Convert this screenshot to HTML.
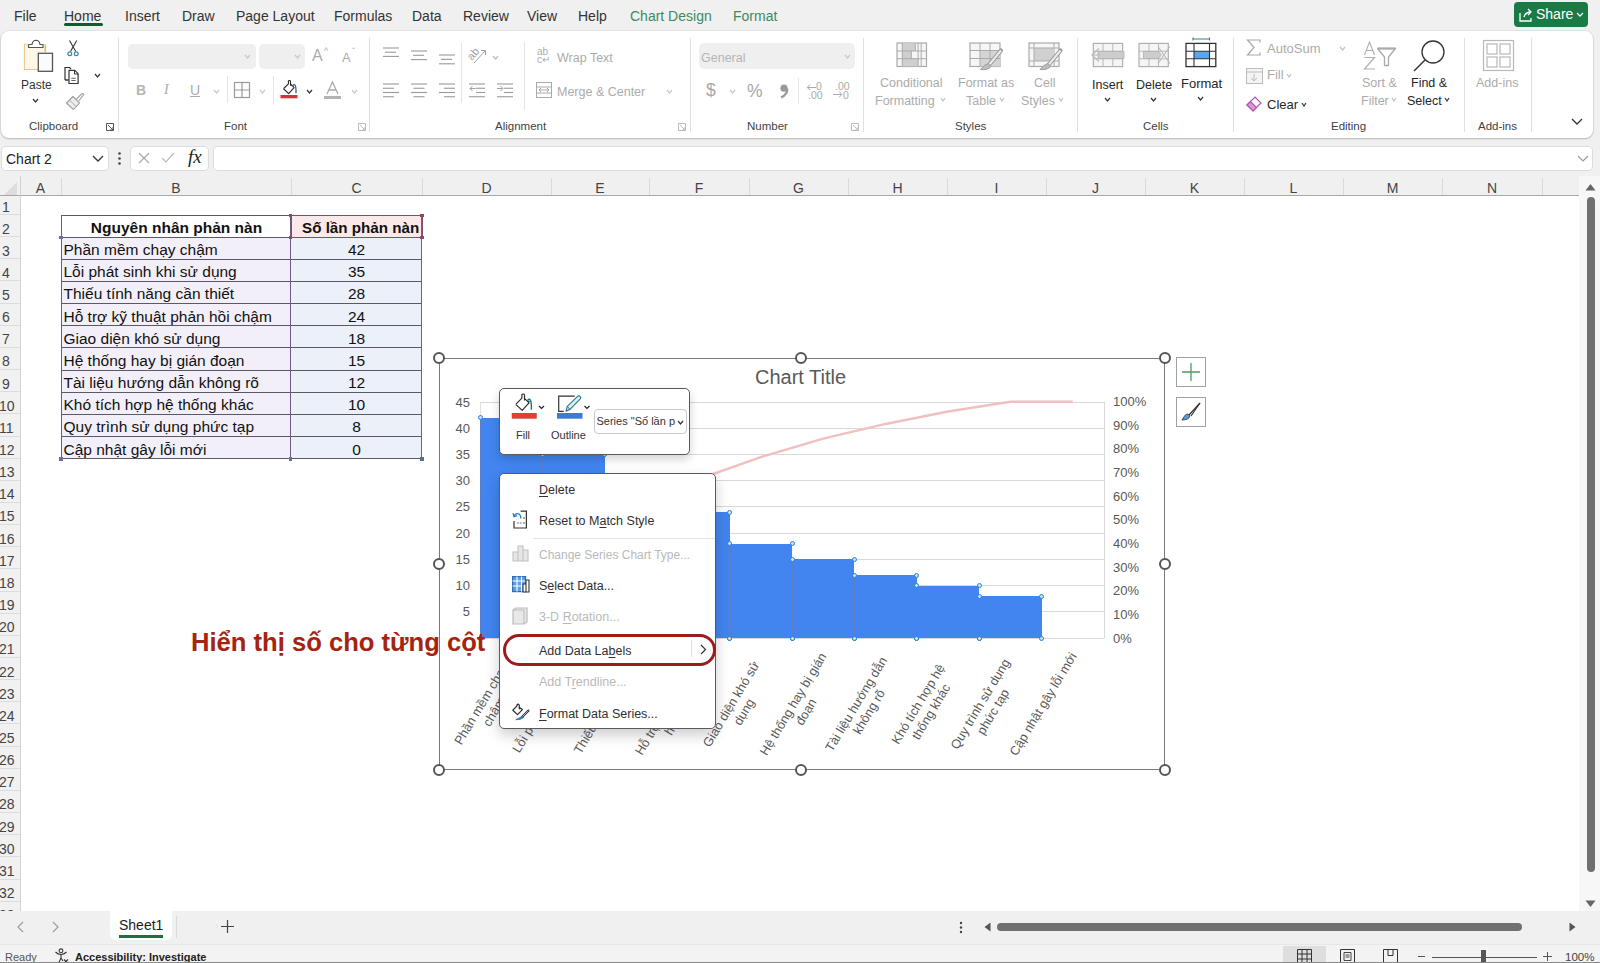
<!DOCTYPE html>
<html><head><meta charset="utf-8"><style>
*{box-sizing:border-box;margin:0;padding:0}
html,body{width:1600px;height:963px;overflow:hidden;background:#f0f0f0;font-family:"Liberation Sans",sans-serif;color:#242424}
.a{position:absolute}
.t{position:absolute;white-space:nowrap;line-height:1}
svg{position:absolute;overflow:visible}
.tab{font-size:14px;top:9px;color:#333}
.gl{font-size:11.5px;top:121px;color:#424242}
.rb{font-size:12.5px;color:#262626}
.dis{color:#ababab}
.sep{position:absolute;width:1px;background:#e1e1e1}
.ch{position:absolute;top:176px;height:20px;font-size:14px;color:#444;text-align:center;line-height:24px}
.chs{position:absolute;top:178px;width:1px;height:17px;background:#dadada}
.rh{position:absolute;left:-1px;width:14px;font-size:14px;color:#444;text-align:center;line-height:22px;white-space:nowrap}
.rhs{position:absolute;left:0;width:20px;height:1px;background:#dcdcdc}
.cell{position:absolute;font-size:15.5px;color:#111;line-height:22px;white-space:nowrap}
.cm{position:absolute;left:539px;font-size:12.5px;color:#303030;white-space:nowrap;line-height:1}
.cm.d{color:#b9b9b9}
.cm u{text-decoration-thickness:1px;text-underline-offset:2px}
.yl{position:absolute;font-size:13px;color:#595959;line-height:1;text-align:right;width:40px;left:430px}
.yr{position:absolute;font-size:13px;color:#595959;line-height:1;left:1113px}
.cat{position:absolute;font-size:12.75px;color:#595959;line-height:15px;text-align:center;white-space:pre;transform-origin:50% 7.5px}
.hd{position:absolute;width:12px;height:12px;border-radius:50%;border:2px solid #555;background:#fff}
.sh{position:absolute;width:5px;height:5px;border-radius:50%;border:1px solid #2f7ed8;background:#bfe6ff}
</style></head><body>
<div class="t tab" style="left:14px">File</div>
<div class="t tab" style="left:64px">Home</div>
<div class="t tab" style="left:125px">Insert</div>
<div class="t tab" style="left:182px">Draw</div>
<div class="t tab" style="left:236px">Page Layout</div>
<div class="t tab" style="left:334px">Formulas</div>
<div class="t tab" style="left:412px">Data</div>
<div class="t tab" style="left:463px">Review</div>
<div class="t tab" style="left:527px">View</div>
<div class="t tab" style="left:578px">Help</div>
<div class="a" style="left:64px;top:23px;width:39px;height:3px;border-radius:2px;background:#0e5c2f"></div>
<div class="t tab" style="left:630px;color:#3f8a60">Chart Design</div>
<div class="t tab" style="left:733px;color:#3f8a60">Format</div>
<div class="a" style="left:1514px;top:2px;width:74px;height:25px;border-radius:4px;background:#1a7a45"></div>
<svg style="left:1518px;top:7px" width="16" height="16" viewBox="0 0 16 16"><path d="M2 6v8h11v-3M6 10c1-4 4-5 7-5M10 2l3 3-3 3" fill="none" stroke="#fff" stroke-width="1.3"/></svg>
<div class="t" style="left:1536px;top:7px;font-size:14px;color:#fff">Share</div>
<svg style="left:1576px;top:12px" width="8" height="5"><path d="M1 1l3 3 3-3" fill="none" stroke="#fff" stroke-width="1.3"/></svg>
<div class="a" style="left:1px;top:31px;width:1592px;height:107px;background:#fff;border-radius:8px;box-shadow:0 0 0 1px rgba(0,0,0,0.05),0 1px 2px rgba(0,0,0,0.2)"></div>
<div class="t gl" style="left:29px">Clipboard</div>
<div class="t gl" style="left:224px">Font</div>
<div class="t gl" style="left:495px">Alignment</div>
<div class="t gl" style="left:747px">Number</div>
<div class="t gl" style="left:955px">Styles</div>
<div class="t gl" style="left:1143px">Cells</div>
<div class="t gl" style="left:1331px">Editing</div>
<div class="t gl" style="left:1478px">Add-ins</div>
<div class="sep" style="left:118px;top:38px;height:94px"></div>
<div class="sep" style="left:369px;top:38px;height:94px"></div>
<div class="sep" style="left:690px;top:38px;height:94px"></div>
<div class="sep" style="left:863px;top:38px;height:94px"></div>
<div class="sep" style="left:1077px;top:38px;height:94px"></div>
<div class="sep" style="left:1233px;top:38px;height:94px"></div>
<div class="sep" style="left:1464px;top:38px;height:94px"></div>
<div class="sep" style="left:1531px;top:38px;height:94px"></div>
<div class="t rb" style="left:21px;top:79px;font-size:12px;color:#333">Paste</div>
<svg style="left:32px;top:98px" width="7" height="5"><path d="M1 1l2.5 3 2.5-3" fill="none" stroke="#333" stroke-width="1.2"/></svg>
<svg style="left:94px;top:73px" width="7" height="5"><path d="M1 1l2.5 3 2.5-3" fill="none" stroke="#333" stroke-width="1.2"/></svg>
<svg style="left:18px;top:36px" width="90" height="80" viewBox="0 0 90 80"><path d="M9.5 8.5H6.7V33.3H20" fill="#fdf6ea" stroke="#e8b860" stroke-width="1.6"/><path d="M6.7 8.5V33.3H20V17H27.3V8.5H24" fill="#fdf6ea" stroke="none"/><path d="M27.3 8.5V16" fill="none" stroke="#e8b860" stroke-width="1.6"/><path d="M10.5 11.5V8.5H14Q14.5 4.3 18 4.2Q21.5 4.3 22 8.5H25V11.5Z" fill="#fff" stroke="#555" stroke-width="1.15" stroke-linejoin="round"/><rect x="20.3" y="17.3" width="14.2" height="18" fill="#fbfbfb" stroke="#555" stroke-width="1.3"/><path d="M51.5 4.5L57.8 15.5M58.8 4.5L52.5 15.5" stroke="#333" stroke-width="1.1"/><circle cx="51.8" cy="17.8" r="1.9" fill="none" stroke="#3a8aa8" stroke-width="1.2"/><circle cx="58.2" cy="17.8" r="1.9" fill="none" stroke="#3a8aa8" stroke-width="1.2"/><g transform="translate(-6.5 0)"><path d="M53.5 44V31.5H58L59.5 33" fill="none" stroke="#333" stroke-width="1.2"/><path d="M53.5 44H57" stroke="#333" stroke-width="1.5"/><path d="M57.5 34.3H63.3L66.6 37.6V47.5H57.5Z" fill="#fff" stroke="#333" stroke-width="1.2" stroke-linejoin="round"/><path d="M63 34.5V38H66.5" fill="none" stroke="#333" stroke-width="1"/><path d="M59.8 42.3h4.4M59.8 44.5h4.4" stroke="#555" stroke-width="0.9"/></g><path d="M48.5 67L55 60.5L61.5 67L55.5 73.5Z" fill="#ededed" stroke="#a0a0a0" stroke-width="1.1" stroke-linejoin="round"/><path d="M51.5 64L58.5 71" stroke="#a0a0a0" stroke-width="0.9"/><path d="M58 63.5L63.8 57.8Q65.3 57.2 65.8 58.5L60.8 64.8" fill="#fff" stroke="#a0a0a0" stroke-width="1.1"/></svg>
<svg style="left:106px;top:123px" width="8" height="8"><path d="M0.5 7.5V0.5h7v7z" fill="none" stroke="#555" stroke-width="1"/><path d="M2 2l5 5M4 7h3V4" fill="none" stroke="#555" stroke-width="1"/></svg>
<div class="a" style="left:128px;top:44px;width:128px;height:25px;background:#efefef;border-radius:5px"></div>
<svg style="left:244px;top:54px" width="7" height="5"><path d="M1 1l2.5 3 2.5-3" fill="none" stroke="#c8c8c8" stroke-width="1.2"/></svg>
<div class="a" style="left:259px;top:44px;width:46px;height:25px;background:#efefef;border-radius:5px"></div>
<svg style="left:294px;top:54px" width="7" height="5"><path d="M1 1l2.5 3 2.5-3" fill="none" stroke="#c8c8c8" stroke-width="1.2"/></svg>
<div class="t dis" style="left:312px;top:48px;font-size:16px">A</div><div class="t dis" style="left:324px;top:47px;font-size:9px">^</div>
<div class="t dis" style="left:342px;top:51px;font-size:13px">A</div><div class="t dis" style="left:352px;top:47px;font-size:9px">ˇ</div>
<div class="t dis" style="left:136px;top:83px;font-size:14px;font-weight:bold;color:#b5b5b5">B</div>
<div class="t dis" style="left:164px;top:83px;font-size:14px;font-style:italic;font-family:'Liberation Serif'">I</div>
<div class="t dis" style="left:190px;top:83px;font-size:14px;text-decoration:underline">U</div>
<svg style="left:213px;top:89px" width="7" height="5"><path d="M1 1l2.5 3 2.5-3" fill="none" stroke="#c8c8c8" stroke-width="1.2"/></svg>
<div class="a" style="left:227px;top:76px;width:1px;height:27px;background:#e4e4e4"></div>
<svg style="left:234px;top:82px" width="16" height="16"><rect x="0.5" y="0.5" width="15" height="15" fill="none" stroke="#999" stroke-width="1.2"/><path d="M8 0v16M0 8h16" stroke="#999" stroke-width="1.2"/></svg>
<svg style="left:259px;top:89px" width="7" height="5"><path d="M1 1l2.5 3 2.5-3" fill="none" stroke="#c8c8c8" stroke-width="1.2"/></svg>
<div class="a" style="left:273px;top:76px;width:1px;height:27px;background:#e4e4e4"></div>
<svg style="left:0;top:0" width="320" height="110"><g transform="translate(274.9 77.3) scale(0.8)"><path d="M10.8 14.3L16.9 8.2V4.6Q17.2 3.9 18.3 4.0Q19.3 4.1 19.5 4.8V10.6M19.5 8.4L24 12.9L17.2 20.4L10.8 14.3" fill="#fff" stroke="#2a2a2a" stroke-width="1.4" stroke-linejoin="round"/><path d="M22.6 10.6Q23.2 8.6 24.8 9.3Q26.6 10.4 26.4 19.8" fill="none" stroke="#1f6a80" stroke-width="1.6"/></g><rect x="280.5" y="95" width="17" height="3.3" fill="#d13438"/></svg>
<svg style="left:306px;top:89px" width="7" height="5"><path d="M1 1l2.5 3 2.5-3" fill="none" stroke="#333" stroke-width="1.2"/></svg>
<svg style="left:324px;top:81px" width="17" height="19" viewBox="0 0 17 19"><path d="M3 13L8.5 1 14 13M5 9h7" fill="none" stroke="#aaa" stroke-width="1.3"/><rect x="0" y="15" width="17" height="3" fill="#b3b3b3"/></svg>
<svg style="left:351px;top:89px" width="7" height="5"><path d="M1 1l2.5 3 2.5-3" fill="none" stroke="#c8c8c8" stroke-width="1.2"/></svg>
<svg style="left:358px;top:123px" width="8" height="8"><path d="M0.5 7.5V0.5h7v7z" fill="none" stroke="#bbb" stroke-width="1"/><path d="M2 2l5 5M4 7h3V4" fill="none" stroke="#bbb" stroke-width="1"/></svg>
<svg style="left:383px;top:47px" width="18" height="15"><path d="M0 1.00h16" stroke="#9a9a9a" stroke-width="1.1"/><path d="M2 5.20h11" stroke="#9a9a9a" stroke-width="1.1"/><path d="M0 9.40h16" stroke="#9a9a9a" stroke-width="1.1"/></svg>
<svg style="left:411px;top:50px" width="18" height="15"><path d="M0 1.00h16" stroke="#9a9a9a" stroke-width="1.1"/><path d="M2 5.30h11" stroke="#9a9a9a" stroke-width="1.1"/><path d="M0 9.60h16" stroke="#9a9a9a" stroke-width="1.1"/></svg>
<svg style="left:439px;top:54px" width="18" height="15"><path d="M0 1.00h16" stroke="#9a9a9a" stroke-width="1.1"/><path d="M2 5.40h11" stroke="#9a9a9a" stroke-width="1.1"/><path d="M0 9.80h16" stroke="#9a9a9a" stroke-width="1.1"/></svg>
<svg style="left:383px;top:82.5px" width="18" height="19"><path d="M0 1.00h16" stroke="#9a9a9a" stroke-width="1.1"/><path d="M0 5.25h11" stroke="#9a9a9a" stroke-width="1.1"/><path d="M0 9.50h16" stroke="#9a9a9a" stroke-width="1.1"/><path d="M0 13.75h11" stroke="#9a9a9a" stroke-width="1.1"/></svg>
<svg style="left:411px;top:82.5px" width="18" height="19"><path d="M0 1.00h16" stroke="#9a9a9a" stroke-width="1.1"/><path d="M2.5 5.25h11" stroke="#9a9a9a" stroke-width="1.1"/><path d="M0 9.50h16" stroke="#9a9a9a" stroke-width="1.1"/><path d="M2.5 13.75h11" stroke="#9a9a9a" stroke-width="1.1"/></svg>
<svg style="left:439px;top:82.5px" width="18" height="19"><path d="M0 1.00h16" stroke="#9a9a9a" stroke-width="1.1"/><path d="M5 5.25h11" stroke="#9a9a9a" stroke-width="1.1"/><path d="M0 9.50h16" stroke="#9a9a9a" stroke-width="1.1"/><path d="M5 13.75h11" stroke="#9a9a9a" stroke-width="1.1"/></svg>
<div class="a" style="left:461px;top:43px;width:1px;height:60px;background:#e4e4e4"></div>
<svg style="left:468px;top:46px" width="20" height="18" viewBox="0 0 20 18"><text x="0" y="0" font-size="11" fill="#a0a0a0" transform="translate(4 15) rotate(-50)" font-family="Liberation Sans">ab</text><path d="M6 17L17 5M13 4.5h4.5V9" fill="none" stroke="#a0a0a0" stroke-width="1"/></svg>
<svg style="left:492px;top:55px" width="7" height="5"><path d="M1 1l2.5 3 2.5-3" fill="none" stroke="#c0c0c0" stroke-width="1.2"/></svg>
<svg style="left:469px;top:82.5px" width="18" height="19"><path d="M0 1.00h16" stroke="#9a9a9a" stroke-width="1.1"/><path d="M7 5.25h9" stroke="#9a9a9a" stroke-width="1.1"/><path d="M7 9.50h9" stroke="#9a9a9a" stroke-width="1.1"/><path d="M0 13.75h16" stroke="#9a9a9a" stroke-width="1.1"/></svg>
<svg style="left:497px;top:82.5px" width="18" height="19"><path d="M0 1.00h16" stroke="#9a9a9a" stroke-width="1.1"/><path d="M7 5.25h9" stroke="#9a9a9a" stroke-width="1.1"/><path d="M7 9.50h9" stroke="#9a9a9a" stroke-width="1.1"/><path d="M0 13.75h16" stroke="#9a9a9a" stroke-width="1.1"/></svg>
<svg style="left:469px;top:85px" width="7" height="7"><path d="M6.5 3.5H1M3.5 1L1 3.5 3.5 6" fill="none" stroke="#a0a0a0" stroke-width="1"/></svg>
<svg style="left:497px;top:85px" width="7" height="7"><path d="M0 3.5h5.5M3.5 1L6 3.5 3.5 6" fill="none" stroke="#a0a0a0" stroke-width="1"/></svg>
<div class="a" style="left:524px;top:42px;width:1px;height:68px;background:#e4e4e4"></div>
<div class="t dis" style="left:537px;top:48px;font-size:10px;line-height:8px">ab<br>c↵</div>
<div class="t dis rb" style="left:557px;top:51.5px;font-size:12.5px">Wrap Text</div>
<svg style="left:536px;top:82px" width="16" height="16"><rect x="0.5" y="0.5" width="15" height="15" fill="none" stroke="#aaa"/><path d="M0 5h16M0 11h16M3 8h10M5 6l-2 2 2 2M11 6l2 2-2 2" fill="none" stroke="#aaa"/></svg>
<div class="t dis rb" style="left:557px;top:85.5px;font-size:12.5px">Merge &amp; Center</div>
<svg style="left:666px;top:89px" width="7" height="5"><path d="M1 1l2.5 3 2.5-3" fill="none" stroke="#c8c8c8" stroke-width="1.2"/></svg>
<svg style="left:678px;top:123px" width="8" height="8"><path d="M0.5 7.5V0.5h7v7z" fill="none" stroke="#bbb" stroke-width="1"/><path d="M2 2l5 5M4 7h3V4" fill="none" stroke="#bbb" stroke-width="1"/></svg>
<div class="a" style="left:699px;top:43px;width:156px;height:26px;background:#efefef;border-radius:5px"></div>
<div class="t dis" style="left:701px;top:51.5px;font-size:12.5px;color:#b5b5b5">General</div>
<svg style="left:844px;top:54px" width="7" height="5"><path d="M1 1l2.5 3 2.5-3" fill="none" stroke="#c8c8c8" stroke-width="1.2"/></svg>
<div class="t dis" style="left:706px;top:82px;font-size:17.5px;color:#a8a8a8">$</div>
<svg style="left:729px;top:89px" width="7" height="5"><path d="M1 1l2.5 3 2.5-3" fill="none" stroke="#c8c8c8" stroke-width="1.2"/></svg>
<div class="t dis" style="left:747px;top:83px;font-size:17.5px;color:#a8a8a8">%</div>
<svg style="left:778px;top:82px" width="12" height="17"><circle cx="6" cy="6.2" r="3.6" fill="#9a9a9a"/><path d="M9.3 6.5Q9.6 12.5 3 15.5" fill="none" stroke="#9a9a9a" stroke-width="2.2"/></svg>
<div class="a" style="left:798px;top:78px;width:1px;height:26px;background:#e4e4e4"></div>
<div class="t dis" style="left:816px;top:80.5px;font-size:10.5px;color:#aaa">0</div><div class="t dis" style="left:808px;top:90px;font-size:10.5px;color:#aaa">.00</div>
<svg style="left:806px;top:82px" width="11" height="8"><path d="M10 5.5H1.5M4 2.5L1.2 5.5L4 8" fill="none" stroke="#aaa" stroke-width="1"/></svg>
<div class="t dis" style="left:835px;top:80.5px;font-size:10.5px;color:#aaa">.00</div><div class="t dis" style="left:843px;top:90px;font-size:10.5px;color:#aaa">0</div>
<svg style="left:833px;top:91px" width="11" height="8"><path d="M0 3.5H8.5M6 0.5L8.8 3.5L6 6.5" fill="none" stroke="#aaa" stroke-width="1"/></svg>
<svg style="left:851px;top:123px" width="8" height="8"><path d="M0.5 7.5V0.5h7v7z" fill="none" stroke="#bbb" stroke-width="1"/><path d="M2 2l5 5M4 7h3V4" fill="none" stroke="#bbb" stroke-width="1"/></svg>
<svg style="left:870px;top:38px" width="200" height="40" viewBox="0 0 200 40"><rect x="27" y="5" width="29.5" height="23.5" fill="#f6f6f6" stroke="#ababab" stroke-width="1.2"/><path d="M32.3 5.5h13v7.5h-13zM32.3 13h9v7.7h-9zM32.3 20.7h16v7.5h-16z" fill="#cfcfcf"/><path d="M27 13h29.5M27 20.7h29.5M32.3 5v23.5M48.1 5v23.5M51.2 5v23.5" stroke="#ababab" stroke-width="1"/><path d="M41.3 13v7.7M45.3 5.5v7.5" stroke="#ababab" stroke-width="1"/><rect x="100" y="5" width="30" height="23.5" fill="#f6f6f6" stroke="#ababab" stroke-width="1.2"/><path d="M110 12.5h20v16h-20z" fill="#d4d4d4"/><path d="M100 12.5h30M100 20.5h30M110 5v23.5M120 5v23.5" stroke="#ababab" stroke-width="1"/><path d="M131 12.5L118.5 27.5" stroke="#9a9a9a" stroke-width="4.2" stroke-linecap="round"/><path d="M131 12.5L118.5 27.5" stroke="#ececec" stroke-width="2"/><path d="M118.5 25.5Q114 26.5 110.5 31.5Q117.5 32.5 121 28.5Z" fill="#bdbdbd" stroke="#9a9a9a" stroke-width="0.9"/><rect x="159" y="5" width="30" height="23.5" fill="#f6f6f6" stroke="#ababab" stroke-width="1.2"/><path d="M164 10h19v13h-19z" fill="#d0d0d0"/><path d="M159 10h30M159 23h30M164 5v23.5M184 5v23.5" stroke="#ababab" stroke-width="1"/><path d="M190.5 12.5L178 27.5" stroke="#9a9a9a" stroke-width="4.2" stroke-linecap="round"/><path d="M190.5 12.5L178 27.5" stroke="#ececec" stroke-width="2"/><path d="M178 25.5Q173.5 26.5 170 31.5Q177 32.5 180.5 28.5Z" fill="#bdbdbd" stroke="#9a9a9a" stroke-width="0.9"/></svg>
<div class="t dis rb" style="left:880px;top:77px;font-size:12.5px">Conditional</div>
<div class="t dis rb" style="left:875px;top:95px;font-size:12.5px">Formatting</div>
<div class="t dis rb" style="left:958px;top:77px;font-size:12.5px">Format as</div>
<div class="t dis rb" style="left:966px;top:95px;font-size:12.5px">Table</div>
<div class="t dis rb" style="left:1034px;top:77px;font-size:12.5px">Cell</div>
<div class="t dis rb" style="left:1021px;top:95px;font-size:12.5px">Styles</div>
<svg style="left:940px;top:97px" width="6" height="5"><path d="M1 1l2.0 3 2.0-3" fill="none" stroke="#c0c0c0" stroke-width="1.2"/></svg>
<svg style="left:999px;top:97px" width="6" height="5"><path d="M1 1l2.0 3 2.0-3" fill="none" stroke="#c0c0c0" stroke-width="1.2"/></svg>
<svg style="left:1058px;top:97px" width="6" height="5"><path d="M1 1l2.0 3 2.0-3" fill="none" stroke="#c0c0c0" stroke-width="1.2"/></svg>
<svg style="left:1085px;top:36px" width="140" height="35" viewBox="0 0 140 35"><rect x="8.3" y="7.4" width="29.3" height="23.2" fill="#f5f5f5" stroke="#b0b0b0" stroke-width="1.2"/><path d="M8.3 15.2h29.3M8.3 22.8h29.3M18 7.4v23.2M27.8 7.4v23.2" stroke="#b8b8b8" stroke-width="1"/><path d="M13 15.5h26v7h-26z" fill="#cdcdcd" stroke="#b0b0b0" stroke-width="0.8"/><path d="M14 12.5L7 19L14 25.5" fill="none" stroke="#bdbdbd" stroke-width="1.3"/><path d="M8 19h7" stroke="#bdbdbd" stroke-width="1.2"/><rect x="54" y="7.4" width="29.3" height="23.2" fill="#f5f5f5" stroke="#b0b0b0" stroke-width="1.2"/><path d="M54 15.2h29.3M54 22.8h29.3M64 7.4v23.2M73.5 7.4v23.2" stroke="#b8b8b8" stroke-width="1"/><path d="M58.5 15.5h15l3 3.5-3 3.5h-15z" fill="#cdcdcd" stroke="#b0b0b0" stroke-width="0.8"/><path d="M73 10.5L85 27.5M85 10.5L73 27.5" stroke="#bdbdbd" stroke-width="1.3"/><path d="M108 3h16.5M108 1.5v3M124.5 1.5v3" stroke="#3a7a8a" stroke-width="1.1"/><rect x="101" y="7.4" width="29.8" height="23.2" fill="#fff" stroke="#333" stroke-width="1.3"/><path d="M109 15.2h15.5v7.6h-15.5z" fill="#5aa6ee"/><path d="M101 15.2h29.8M101 22.8h29.8M109 7.4v23.2M124.5 7.4v23.2" stroke="#333" stroke-width="1.1"/></svg>
<div class="t rb" style="left:1092px;top:79px;font-size:12.5px">Insert</div>
<div class="t rb" style="left:1136px;top:79px;font-size:12.5px">Delete</div>
<div class="t rb" style="left:1181px;top:77px;font-size:13px">Format</div>
<svg style="left:1104px;top:97px" width="7" height="5"><path d="M1 1l2.5 3 2.5-3" fill="none" stroke="#333" stroke-width="1.2"/></svg>
<svg style="left:1150px;top:97px" width="7" height="5"><path d="M1 1l2.5 3 2.5-3" fill="none" stroke="#333" stroke-width="1.2"/></svg>
<svg style="left:1197px;top:96px" width="7" height="5"><path d="M1 1l2.5 3 2.5-3" fill="none" stroke="#333" stroke-width="1.2"/></svg>
<svg style="left:1246px;top:39px" width="17" height="17"><path d="M14 3.5V1H1.5L8 8.5L1.5 16H14V13.5" fill="none" stroke="#a8a8a8" stroke-width="1.2"/></svg>
<div class="t dis rb" style="left:1267px;top:42px;font-size:13px">AutoSum</div>
<svg style="left:1339px;top:46px" width="7" height="5"><path d="M1 1l2.5 3 2.5-3" fill="none" stroke="#c0c0c0" stroke-width="1.2"/></svg>
<svg style="left:1246px;top:68px" width="17" height="16"><rect x="0.5" y="0.5" width="16" height="15" fill="#f4f4f4" stroke="#bbb"/><path d="M0 4h16M8 6v7M5 10l3 3 3-3" fill="none" stroke="#bbb"/></svg>
<div class="t dis rb" style="left:1267px;top:68px;font-size:13px">Fill</div>
<svg style="left:1286px;top:73px" width="6" height="5"><path d="M1 1l2.0 3 2.0-3" fill="none" stroke="#c0c0c0" stroke-width="1.2"/></svg>
<svg style="left:1246px;top:95px" width="17" height="17" viewBox="0 0 17 17"><path d="M1 10l8-8 6 6-8 8z" fill="#fff" stroke="#b255b0" stroke-width="1.2"/><path d="M1 10l3.5-3.5 6 6L7 16z" fill="#d89ad6" stroke="#b255b0" stroke-width="1.2"/></svg>
<div class="t rb" style="left:1267px;top:98px;font-size:13px">Clear</div>
<svg style="left:1301px;top:102px" width="6" height="5"><path d="M1 1l2.0 3 2.0-3" fill="none" stroke="#333" stroke-width="1.2"/></svg>
<svg style="left:1362px;top:40px" width="36" height="32" viewBox="0 0 36 32"><path d="M2.5 15L7.5 2L12.5 15M4.3 10.5h6.4" fill="none" stroke="#b0b0b0" stroke-width="1.1"/><path d="M2.5 17.5h10L2.5 29h10.5" fill="none" stroke="#b0b0b0" stroke-width="1.2"/><path d="M15.5 8.5h18l-7 8.5v8.5h-4v-8.5z" fill="none" stroke="#aaaaaa" stroke-width="1.3" stroke-linejoin="round"/><path d="M15.5 8.5h18" stroke="#aaa" stroke-width="2"/></svg>
<div class="t dis rb" style="left:1362px;top:77px;font-size:12.5px">Sort &amp;</div>
<div class="t dis rb" style="left:1361px;top:95px;font-size:12.5px">Filter</div>
<svg style="left:1391px;top:97px" width="6" height="5"><path d="M1 1l2.0 3 2.0-3" fill="none" stroke="#c0c0c0" stroke-width="1.2"/></svg>
<svg style="left:1413px;top:39px" width="34" height="32" viewBox="0 0 34 32"><circle cx="20" cy="13" r="11" fill="none" stroke="#333" stroke-width="1.3"/><path d="M12 21L1 32" stroke="#333" stroke-width="1.4"/></svg>
<div class="t rb" style="left:1411px;top:77px;font-size:12.5px">Find &amp;</div>
<div class="t rb" style="left:1407px;top:95px;font-size:12.5px">Select</div>
<svg style="left:1444px;top:97px" width="6" height="5"><path d="M1 1l2.0 3 2.0-3" fill="none" stroke="#333" stroke-width="1.2"/></svg>
<svg style="left:1483px;top:40px" width="31" height="31" viewBox="0 0 31 31"><rect x="0.5" y="0.5" width="30" height="30" fill="none" stroke="#b8b8b8" stroke-width="1.2"/><rect x="4" y="4" width="10" height="10" fill="none" stroke="#b8b8b8" stroke-width="1.2"/><rect x="17" y="4" width="10" height="10" fill="none" stroke="#b8b8b8" stroke-width="1.2"/><rect x="4" y="17" width="10" height="10" fill="none" stroke="#b8b8b8" stroke-width="1.2"/><rect x="17" y="17" width="10" height="10" fill="none" stroke="#b8b8b8" stroke-width="1.2"/></svg>
<div class="t dis rb" style="left:1476px;top:77px;font-size:12.5px">Add-ins</div>
<svg style="left:1571px;top:118px" width="12" height="8"><path d="M1 1l5 5 5-5" fill="none" stroke="#333" stroke-width="1.3"/></svg>
<div class="a" style="left:2px;top:147px;width:106px;height:23px;background:#fff;border-radius:4px;box-shadow:0 0 0 1px #dcdcdc"></div>
<div class="t" style="left:6px;top:152px;font-size:14px;color:#222">Chart 2</div>
<svg style="left:92px;top:155px" width="12" height="8"><path d="M1 1l5 5 5-5" fill="none" stroke="#333" stroke-width="1.3"/></svg>
<svg style="left:118px;top:152px" width="3" height="14"><circle cx="1.5" cy="1.5" r="1.3" fill="#444"/><circle cx="1.5" cy="6.5" r="1.3" fill="#444"/><circle cx="1.5" cy="11.5" r="1.3" fill="#444"/></svg>
<div class="a" style="left:131px;top:147px;width:77px;height:23px;background:#fff;border-radius:4px;box-shadow:0 0 0 1px #dcdcdc"></div>
<svg style="left:138px;top:152px" width="12" height="12"><path d="M1 1l10 10M11 1L1 11" stroke="#aaa" stroke-width="1.2"/></svg>
<svg style="left:161px;top:152px" width="14" height="12"><path d="M1 6l4 4 8-9" fill="none" stroke="#bbb" stroke-width="1.2"/></svg>
<div class="t" style="left:188px;top:147px;font-size:19px;font-style:italic;font-family:'Liberation Serif';color:#222">fx</div>
<div class="a" style="left:214px;top:147px;width:1378px;height:23px;background:#fff;border-radius:4px;box-shadow:0 0 0 1px #dcdcdc"></div>
<svg style="left:1577px;top:155px" width="12" height="8"><path d="M1 1l5 5 5-5" fill="none" stroke="#999" stroke-width="1.1"/></svg>
<div class="a" style="left:20px;top:196px;width:1559px;height:715px;background:#fff"></div>
<div class="a" style="left:0;top:176px;width:1579px;height:20px;background:#f0f0f0;border-bottom:1px solid #a8a8a8"></div>
<svg style="left:4px;top:181px" width="14" height="14"><path d="M13 1v13H0z" fill="#dcdcdc"/></svg>
<div class="a" style="left:0;top:196px;width:21px;height:715px;background:#f1f1f1;border-right:1px solid #d4d4d4"></div>
<div class="ch" style="left:20px;width:41px">A</div>
<div class="ch" style="left:61px;width:230px">B</div>
<div class="ch" style="left:291px;width:131px">C</div>
<div class="ch" style="left:422px;width:129px">D</div>
<div class="ch" style="left:551px;width:98px">E</div>
<div class="ch" style="left:649px;width:100px">F</div>
<div class="ch" style="left:749px;width:99px">G</div>
<div class="ch" style="left:848px;width:99px">H</div>
<div class="ch" style="left:947px;width:99px">I</div>
<div class="ch" style="left:1046px;width:99px">J</div>
<div class="ch" style="left:1145px;width:99px">K</div>
<div class="ch" style="left:1244px;width:99px">L</div>
<div class="ch" style="left:1343px;width:99px">M</div>
<div class="ch" style="left:1442px;width:100px">N</div>
<div class="chs" style="left:61px"></div>
<div class="chs" style="left:291px"></div>
<div class="chs" style="left:422px"></div>
<div class="chs" style="left:551px"></div>
<div class="chs" style="left:649px"></div>
<div class="chs" style="left:749px"></div>
<div class="chs" style="left:848px"></div>
<div class="chs" style="left:947px"></div>
<div class="chs" style="left:1046px"></div>
<div class="chs" style="left:1145px"></div>
<div class="chs" style="left:1244px"></div>
<div class="chs" style="left:1343px"></div>
<div class="chs" style="left:1442px"></div>
<div class="chs" style="left:1542px"></div>
<div class="a" style="left:20px;top:176px;width:1px;height:20px;background:#d0d0d0"></div>
<div class="rh" style="top:198.00px;height:19.50px;line-height:19.50px">1</div>
<div class="rhs" style="top:214.00px"></div>
<div class="rh" style="top:217.50px;height:22.15px;line-height:22.15px">2</div>
<div class="rhs" style="top:236.15px"></div>
<div class="rh" style="top:239.65px;height:22.15px;line-height:22.15px">3</div>
<div class="rhs" style="top:258.30px"></div>
<div class="rh" style="top:261.80px;height:22.15px;line-height:22.15px">4</div>
<div class="rhs" style="top:280.45px"></div>
<div class="rh" style="top:283.95px;height:22.15px;line-height:22.15px">5</div>
<div class="rhs" style="top:302.60px"></div>
<div class="rh" style="top:306.10px;height:22.15px;line-height:22.15px">6</div>
<div class="rhs" style="top:324.75px"></div>
<div class="rh" style="top:328.25px;height:22.15px;line-height:22.15px">7</div>
<div class="rhs" style="top:346.90px"></div>
<div class="rh" style="top:350.40px;height:22.15px;line-height:22.15px">8</div>
<div class="rhs" style="top:369.05px"></div>
<div class="rh" style="top:372.55px;height:22.15px;line-height:22.15px">9</div>
<div class="rhs" style="top:391.20px"></div>
<div class="rh" style="top:394.70px;height:22.15px;line-height:22.15px">10</div>
<div class="rhs" style="top:413.35px"></div>
<div class="rh" style="top:416.85px;height:22.15px;line-height:22.15px">11</div>
<div class="rhs" style="top:435.50px"></div>
<div class="rh" style="top:439.00px;height:22.15px;line-height:22.15px">12</div>
<div class="rhs" style="top:457.65px"></div>
<div class="rh" style="top:461.15px;height:22.15px;line-height:22.15px">13</div>
<div class="rhs" style="top:479.80px"></div>
<div class="rh" style="top:483.30px;height:22.15px;line-height:22.15px">14</div>
<div class="rhs" style="top:501.95px"></div>
<div class="rh" style="top:505.45px;height:22.15px;line-height:22.15px">15</div>
<div class="rhs" style="top:524.10px"></div>
<div class="rh" style="top:527.60px;height:22.15px;line-height:22.15px">16</div>
<div class="rhs" style="top:546.25px"></div>
<div class="rh" style="top:549.75px;height:22.15px;line-height:22.15px">17</div>
<div class="rhs" style="top:568.40px"></div>
<div class="rh" style="top:571.90px;height:22.15px;line-height:22.15px">18</div>
<div class="rhs" style="top:590.55px"></div>
<div class="rh" style="top:594.05px;height:22.15px;line-height:22.15px">19</div>
<div class="rhs" style="top:612.70px"></div>
<div class="rh" style="top:616.20px;height:22.15px;line-height:22.15px">20</div>
<div class="rhs" style="top:634.85px"></div>
<div class="rh" style="top:638.35px;height:22.15px;line-height:22.15px">21</div>
<div class="rhs" style="top:657.00px"></div>
<div class="rh" style="top:660.50px;height:22.15px;line-height:22.15px">22</div>
<div class="rhs" style="top:679.15px"></div>
<div class="rh" style="top:682.65px;height:22.15px;line-height:22.15px">23</div>
<div class="rhs" style="top:701.30px"></div>
<div class="rh" style="top:704.80px;height:22.15px;line-height:22.15px">24</div>
<div class="rhs" style="top:723.45px"></div>
<div class="rh" style="top:726.95px;height:22.15px;line-height:22.15px">25</div>
<div class="rhs" style="top:745.60px"></div>
<div class="rh" style="top:749.10px;height:22.15px;line-height:22.15px">26</div>
<div class="rhs" style="top:767.75px"></div>
<div class="rh" style="top:771.25px;height:22.15px;line-height:22.15px">27</div>
<div class="rhs" style="top:789.90px"></div>
<div class="rh" style="top:793.40px;height:22.15px;line-height:22.15px">28</div>
<div class="rhs" style="top:812.05px"></div>
<div class="rh" style="top:815.55px;height:22.15px;line-height:22.15px">29</div>
<div class="rhs" style="top:834.20px"></div>
<div class="rh" style="top:837.70px;height:22.15px;line-height:22.15px">30</div>
<div class="rhs" style="top:856.35px"></div>
<div class="rh" style="top:859.85px;height:22.15px;line-height:22.15px">31</div>
<div class="rhs" style="top:878.50px"></div>
<div class="rh" style="top:882.00px;height:22.15px;line-height:22.15px">32</div>
<div class="rhs" style="top:900.65px"></div>
<div class="rh" style="top:904.15px;height:22.15px;line-height:22.15px">33</div>
<div class="rhs" style="top:922.80px"></div>
<div class="a" style="left:61.5px;top:237.65px;width:229px;height:221.49999999999997px;background:#f3eff9"></div>
<div class="a" style="left:290.5px;top:215.5px;width:131.5px;height:22.150000000000006px;background:#fbe9ea"></div>
<div class="a" style="left:290.5px;top:237.65px;width:131.5px;height:221.49999999999997px;background:#ebf0f9"></div>
<div class="a" style="left:61px;top:215px;width:361px;height:1px;background:#5a5a66"></div>
<div class="a" style="left:61px;top:237px;width:361px;height:1px;background:#5a5a66"></div>
<div class="a" style="left:61px;top:259px;width:361px;height:1px;background:#5a5a66"></div>
<div class="a" style="left:61px;top:281px;width:361px;height:1px;background:#5a5a66"></div>
<div class="a" style="left:61px;top:303px;width:361px;height:1px;background:#5a5a66"></div>
<div class="a" style="left:61px;top:325px;width:361px;height:1px;background:#5a5a66"></div>
<div class="a" style="left:61px;top:347px;width:361px;height:1px;background:#5a5a66"></div>
<div class="a" style="left:61px;top:370px;width:361px;height:1px;background:#5a5a66"></div>
<div class="a" style="left:61px;top:392px;width:361px;height:1px;background:#5a5a66"></div>
<div class="a" style="left:61px;top:414px;width:361px;height:1px;background:#5a5a66"></div>
<div class="a" style="left:61px;top:436px;width:361px;height:1px;background:#5a5a66"></div>
<div class="a" style="left:61px;top:458px;width:361px;height:1px;background:#5a5a66"></div>
<div class="a" style="left:61px;top:215.5px;width:1.2px;height:243.64999999999998px;background:#6a5a88"></div>
<div class="a" style="left:290px;top:215.5px;width:1.2px;height:243.64999999999998px;background:#6a5a88"></div>
<div class="a" style="left:421.3px;top:215.5px;width:1.2px;height:243.64999999999998px;background:#5a6a88"></div>
<div class="a" style="left:290.5px;top:215.0px;width:132px;height:23.150000000000006px;border:1.2px solid #8c4a5c"></div>
<div class="a" style="left:59.3px;top:236.0px;width:3.4px;height:3.4px;background:#7a6aa0"></div>
<div class="a" style="left:59.3px;top:457.4px;width:3.4px;height:3.4px;background:#7a6aa0"></div>
<div class="a" style="left:288.8px;top:457.4px;width:3.4px;height:3.4px;background:#6a7090"></div>
<div class="a" style="left:288.8px;top:213.8px;width:3.4px;height:3.4px;background:#8c4a5c"></div>
<div class="a" style="left:420.3px;top:213.8px;width:3.4px;height:3.4px;background:#8c4a5c"></div>
<div class="a" style="left:420.3px;top:236.0px;width:3.4px;height:3.4px;background:#8c4a5c"></div>
<div class="a" style="left:288.8px;top:236.0px;width:3.4px;height:3.4px;background:#8c4a5c"></div>
<div class="a" style="left:420.3px;top:457.4px;width:3.4px;height:3.4px;background:#5a7090"></div>
<div class="cell" style="left:62px;top:216.5px;width:229px;text-align:center;font-weight:bold;font-size:15.5px">Nguyên nhân phản nàn</div>
<div class="cell" style="left:302px;top:216.5px;font-weight:bold;font-size:15.2px">Số lần phản nàn</div>
<div class="cell" style="left:63.5px;top:239.15px">Phần mềm chạy chậm</div>
<div class="cell" style="left:291px;top:239.15px;width:131px;text-align:center">42</div>
<div class="cell" style="left:63.5px;top:261.30px">Lỗi phát sinh khi sử dụng</div>
<div class="cell" style="left:291px;top:261.30px;width:131px;text-align:center">35</div>
<div class="cell" style="left:63.5px;top:283.45px">Thiếu tính năng cần thiết</div>
<div class="cell" style="left:291px;top:283.45px;width:131px;text-align:center">28</div>
<div class="cell" style="left:63.5px;top:305.60px">Hỗ trợ kỹ thuật phản hồi chậm</div>
<div class="cell" style="left:291px;top:305.60px;width:131px;text-align:center">24</div>
<div class="cell" style="left:63.5px;top:327.75px">Giao diện khó sử dụng</div>
<div class="cell" style="left:291px;top:327.75px;width:131px;text-align:center">18</div>
<div class="cell" style="left:63.5px;top:349.90px">Hệ thống hay bị gián đoạn</div>
<div class="cell" style="left:291px;top:349.90px;width:131px;text-align:center">15</div>
<div class="cell" style="left:63.5px;top:372.05px">Tài liệu hướng dẫn không rõ</div>
<div class="cell" style="left:291px;top:372.05px;width:131px;text-align:center">12</div>
<div class="cell" style="left:63.5px;top:394.20px">Khó tích hợp hệ thống khác</div>
<div class="cell" style="left:291px;top:394.20px;width:131px;text-align:center">10</div>
<div class="cell" style="left:63.5px;top:416.35px">Quy trình sử dụng phức tạp</div>
<div class="cell" style="left:291px;top:416.35px;width:131px;text-align:center">8</div>
<div class="cell" style="left:63.5px;top:438.50px">Cập nhật gây lỗi mới</div>
<div class="cell" style="left:291px;top:438.50px;width:131px;text-align:center">0</div>
<div class="a" style="left:438.5px;top:357.5px;width:726.0px;height:412.5px;background:#fff;border:1.5px solid #7a7a7a"></div>
<div class="t" style="left:755px;top:367px;font-size:20px;color:#595959">Chart Title</div>
<div class="a" style="left:480px;top:637.50px;width:624px;height:1px;background:#d9d9d9"></div>
<div class="a" style="left:480px;top:611.28px;width:624px;height:1px;background:#d9d9d9"></div>
<div class="a" style="left:480px;top:585.06px;width:624px;height:1px;background:#d9d9d9"></div>
<div class="a" style="left:480px;top:558.84px;width:624px;height:1px;background:#d9d9d9"></div>
<div class="a" style="left:480px;top:532.62px;width:624px;height:1px;background:#d9d9d9"></div>
<div class="a" style="left:480px;top:506.40px;width:624px;height:1px;background:#d9d9d9"></div>
<div class="a" style="left:480px;top:480.18px;width:624px;height:1px;background:#d9d9d9"></div>
<div class="a" style="left:480px;top:453.96px;width:624px;height:1px;background:#d9d9d9"></div>
<div class="a" style="left:480px;top:427.74px;width:624px;height:1px;background:#d9d9d9"></div>
<div class="a" style="left:480px;top:401.52px;width:624px;height:1px;background:#d9d9d9"></div>
<div class="a" style="left:480px;top:402.02px;width:1px;height:235.98px;background:#e0e0e0"></div>
<div class="a" style="left:1104px;top:402.02px;width:1px;height:235.98px;background:#d9d9d9"></div>
<div class="yl" style="top:605.28px">5</div>
<div class="yl" style="top:579.06px">10</div>
<div class="yl" style="top:552.84px">15</div>
<div class="yl" style="top:526.62px">20</div>
<div class="yl" style="top:500.40px">25</div>
<div class="yl" style="top:474.18px">30</div>
<div class="yl" style="top:447.96px">35</div>
<div class="yl" style="top:421.74px">40</div>
<div class="yl" style="top:395.52px">45</div>
<div class="yr" style="top:631.50px">0%</div>
<div class="yr" style="top:607.87px">10%</div>
<div class="yr" style="top:584.24px">20%</div>
<div class="yr" style="top:560.61px">30%</div>
<div class="yr" style="top:536.98px">40%</div>
<div class="yr" style="top:513.35px">50%</div>
<div class="yr" style="top:489.72px">60%</div>
<div class="yr" style="top:466.09px">70%</div>
<div class="yr" style="top:442.46px">80%</div>
<div class="yr" style="top:418.83px">90%</div>
<div class="yr" style="top:395.20px">100%</div>
<div class="a" style="left:480.00px;top:417.75px;width:62.40px;height:220.25px;background:#4285f0;border-left:1px solid #5a7fc8"></div>
<div class="a" style="left:542.40px;top:454.46px;width:62.40px;height:183.54px;background:#4285f0;border-left:1px solid #5a7fc8"></div>
<div class="a" style="left:604.80px;top:491.17px;width:62.40px;height:146.83px;background:#4285f0;border-left:1px solid #5a7fc8"></div>
<div class="a" style="left:667.20px;top:512.14px;width:62.40px;height:125.86px;background:#4285f0;border-left:1px solid #5a7fc8"></div>
<div class="a" style="left:729.60px;top:543.61px;width:62.40px;height:94.39px;background:#4285f0;border-left:1px solid #5a7fc8"></div>
<div class="a" style="left:792.00px;top:559.34px;width:62.40px;height:78.66px;background:#4285f0;border-left:1px solid #5a7fc8"></div>
<div class="a" style="left:854.40px;top:575.07px;width:62.40px;height:62.93px;background:#4285f0;border-left:1px solid #5a7fc8"></div>
<div class="a" style="left:916.80px;top:585.56px;width:62.40px;height:52.44px;background:#4285f0;border-left:1px solid #5a7fc8"></div>
<div class="a" style="left:979.20px;top:596.05px;width:62.40px;height:41.95px;background:#4285f0;border-left:1px solid #5a7fc8"></div>
<svg style="left:0;top:0" width="1600" height="963"><path d="M511.2 586.3 L573.6 543.2 L636.0 508.8 L698.4 479.2 L760.8 457.1 L823.2 438.6 L885.6 423.9 L948.0 411.5 L1010.4 401.7 L1072.8 401.7" fill="none" stroke="#f0c0c0" stroke-width="2.5"/></svg>
<div class="sh" style="left:477.5px;top:415.3px"></div>
<div class="sh" style="left:539.9px;top:415.3px"></div>
<div class="sh" style="left:477.5px;top:635.5px"></div>
<div class="sh" style="left:539.9px;top:635.5px"></div>
<div class="sh" style="left:539.9px;top:452.0px"></div>
<div class="sh" style="left:602.3px;top:452.0px"></div>
<div class="sh" style="left:539.9px;top:635.5px"></div>
<div class="sh" style="left:602.3px;top:635.5px"></div>
<div class="sh" style="left:602.3px;top:488.7px"></div>
<div class="sh" style="left:664.7px;top:488.7px"></div>
<div class="sh" style="left:602.3px;top:635.5px"></div>
<div class="sh" style="left:664.7px;top:635.5px"></div>
<div class="sh" style="left:664.7px;top:509.6px"></div>
<div class="sh" style="left:727.1px;top:509.6px"></div>
<div class="sh" style="left:664.7px;top:635.5px"></div>
<div class="sh" style="left:727.1px;top:635.5px"></div>
<div class="sh" style="left:727.1px;top:541.1px"></div>
<div class="sh" style="left:789.5px;top:541.1px"></div>
<div class="sh" style="left:727.1px;top:635.5px"></div>
<div class="sh" style="left:789.5px;top:635.5px"></div>
<div class="sh" style="left:789.5px;top:556.8px"></div>
<div class="sh" style="left:851.9px;top:556.8px"></div>
<div class="sh" style="left:789.5px;top:635.5px"></div>
<div class="sh" style="left:851.9px;top:635.5px"></div>
<div class="sh" style="left:851.9px;top:572.6px"></div>
<div class="sh" style="left:914.3px;top:572.6px"></div>
<div class="sh" style="left:851.9px;top:635.5px"></div>
<div class="sh" style="left:914.3px;top:635.5px"></div>
<div class="sh" style="left:914.3px;top:583.1px"></div>
<div class="sh" style="left:976.7px;top:583.1px"></div>
<div class="sh" style="left:914.3px;top:635.5px"></div>
<div class="sh" style="left:976.7px;top:635.5px"></div>
<div class="sh" style="left:976.7px;top:593.5px"></div>
<div class="sh" style="left:1039.1px;top:593.5px"></div>
<div class="sh" style="left:976.7px;top:635.5px"></div>
<div class="sh" style="left:1039.1px;top:635.5px"></div>
<div class="cat" style="left:481.2px;top:703.7px;transform:translate(-50%,-7.5px) rotate(-59deg)">Phần mềm chạy
chậm</div>
<div class="cat" style="left:543.6px;top:703.7px;transform:translate(-50%,-7.5px) rotate(-59deg)">Lỗi phát sinh khi sử
dụng</div>
<div class="cat" style="left:606.0px;top:703.7px;transform:translate(-50%,-7.5px) rotate(-59deg)">Thiếu tính năng cần
thiết</div>
<div class="cat" style="left:668.4px;top:703.7px;transform:translate(-50%,-7.5px) rotate(-59deg)">Hỗ trợ kỹ thuật phản
hồi chậm</div>
<div class="cat" style="left:730.8px;top:703.7px;transform:translate(-50%,-7.5px) rotate(-59deg)">Giao diện khó sử
dụng</div>
<div class="cat" style="left:793.2px;top:703.7px;transform:translate(-50%,-7.5px) rotate(-59deg)">Hệ thống hay bị gián
đoạn</div>
<div class="cat" style="left:855.6px;top:703.7px;transform:translate(-50%,-7.5px) rotate(-59deg)">Tài liệu hướng dẫn
không rõ</div>
<div class="cat" style="left:918.0px;top:703.7px;transform:translate(-50%,-7.5px) rotate(-59deg)">Khó tích hợp hệ
thống khác</div>
<div class="cat" style="left:980.4px;top:703.7px;transform:translate(-50%,-7.5px) rotate(-59deg)">Quy trình sử dụng
phức tạp</div>
<div class="cat" style="left:1042.8px;top:703.7px;transform:translate(-50%,-7.5px) rotate(-59deg)">Cập nhật gây lỗi mới</div>
<div class="hd" style="left:432.5px;top:351.5px"></div>
<div class="hd" style="left:795.0px;top:351.5px"></div>
<div class="hd" style="left:1158.5px;top:351.5px"></div>
<div class="hd" style="left:432.5px;top:558.0px"></div>
<div class="hd" style="left:1158.5px;top:558.0px"></div>
<div class="hd" style="left:432.5px;top:764.0px"></div>
<div class="hd" style="left:795.0px;top:764.0px"></div>
<div class="hd" style="left:1158.5px;top:764.0px"></div>
<div class="a" style="left:1176px;top:357px;width:30px;height:30px;background:#fff;border:1px solid #a0a0a0"></div>
<svg style="left:1181px;top:362px" width="20" height="20"><path d="M10 1v18M1 10h18" stroke="#4e9a6a" stroke-width="1.3"/></svg>
<div class="a" style="left:1176px;top:397px;width:30px;height:30px;background:#fff;border:1px solid #a0a0a0"></div>
<svg style="left:1179px;top:400px" width="24" height="24" viewBox="0 0 24 24"><path d="M21 3L10 15" stroke="#333" stroke-width="1.2"/><path d="M21 3l-9 13" stroke="#333" stroke-width="1.2"/><path d="M9 14c-3 0-4 3-6 6 4 0 7-1 8-4z" fill="#5b9bd5" stroke="#333" stroke-width="0.8"/></svg>
<div class="t" style="left:191px;top:630px;font-size:25.6px;font-weight:bold;color:#a5230f">Hiển thị số cho từng cột</div>
<div class="a" style="left:438.5px;top:600px;width:1.5px;height:80px;background:#7a7a7a"></div>
<div class="a" style="left:499px;top:388px;width:191px;height:67px;background:#fff;border:1.5px solid #5a5a5a;border-radius:5px;box-shadow:0 4px 10px rgba(0,0,0,0.18)"></div>
<svg style="left:505px;top:390px" width="90" height="35" viewBox="0 0 90 35"><path d="M10.8 14.3L16.9 8.2V4.6Q17.2 3.9 18.3 4.0Q19.3 4.1 19.5 4.8V10.6M19.5 8.4L24 12.9L17.2 20.4L10.8 14.3" fill="#fff" stroke="#2a2a2a" stroke-width="1.15" stroke-linejoin="round"/><path d="M22.6 10.6Q23.2 8.6 24.8 9.3Q26.6 10.4 26.4 19.8" fill="none" stroke="#1f6a80" stroke-width="1.4"/><path d="M22.6 10.6Q23.6 12 24.8 11.2" fill="none" stroke="#1f6a80" stroke-width="1.2"/><path d="M34 16l2.5 2.5 2.5-2.5" fill="none" stroke="#222" stroke-width="1.2"/><path d="M69.7 6.2H53.7V21.4H58.8" fill="none" stroke="#333" stroke-width="1.2"/><path d="M61 21.1L62.3 16.4L72.6 6.3Q74.2 5.3 75.3 6.6Q76.2 7.9 75.1 9.1L64.9 19.4Z" fill="#d4f4fa" stroke="#2b7a8a" stroke-width="1.15" stroke-linejoin="round"/><path d="M62.3 16.4L64.9 19.4" stroke="#2b7a8a" stroke-width="1"/><path d="M79.5 16l2.5 2.5 2.5-2.5" fill="none" stroke="#222" stroke-width="1.2"/><rect x="6.75" y="23" width="25" height="5.7" fill="#df3f37"/><rect x="52" y="23" width="25.5" height="5.7" fill="#3d7bd9"/></svg>
<div class="t" style="left:516px;top:430px;font-size:11px;color:#333">Fill</div>
<div class="t" style="left:551px;top:430px;font-size:11px;color:#333">Outline</div>
<div class="a" style="left:594px;top:408.5px;width:93px;height:25px;background:#fff;border:1px solid #c8c8c8;border-radius:4px"></div>
<div class="t" style="left:596.5px;top:416px;font-size:11px;color:#333">Series "Số lần p</div>
<svg style="left:677px;top:420px" width="7" height="5"><path d="M1 1l2.5 3 2.5-3" fill="none" stroke="#333" stroke-width="1.2"/></svg>
<div class="a" style="left:499px;top:472.5px;width:217px;height:256px;background:#fff;border:1.5px solid #5a5a5a;border-radius:5px;box-shadow:0 6px 14px rgba(0,0,0,0.2)"></div>
<div class="cm" style="top:484.3px;"><u>D</u>elete</div>
<div class="cm" style="top:515.0px;">Reset to M<u>a</u>tch Style</div>
<div class="cm d" style="top:548.7px;font-size:12px;">Change Series Chart Type...</div>
<div class="cm" style="top:579.5px;">S<u>e</u>lect Data...</div>
<div class="cm d" style="top:611.4px;">3-D <u>R</u>otation...</div>
<div class="cm" style="top:644.5px;">Add Data La<u>b</u>els</div>
<div class="cm d" style="top:676.0px;">Add T<u>r</u>endline...</div>
<div class="cm" style="top:707.7px;"><u>F</u>ormat Data Series...</div>
<div class="a" style="left:533px;top:537.5px;width:182px;height:1px;background:#e3e3e3"></div>
<div class="a" style="left:690.5px;top:640px;width:1px;height:17px;background:#e0e0e0"></div>
<svg style="left:700px;top:644px" width="7" height="11"><path d="M1 1l4.5 4.5L1 10" fill="none" stroke="#333" stroke-width="1.2"/></svg>
<svg style="left:505px;top:505px" width="30" height="30" viewBox="0 0 30 30"><path d="M15.6 6.2H21.4V23H9V16" fill="none" stroke="#333" stroke-width="1.2"/><path d="M9.2 11.5Q10 8 13.5 8.8Q16 9.8 15.8 13.5" fill="none" stroke="#2b7bbf" stroke-width="1.2"/><path d="M8 8.2L9 11.8L12.2 10.6" fill="none" stroke="#2b7bbf" stroke-width="1.2"/><path d="M18 13h2M12 18h1.6M14.8 18h1.6M18 18h2" stroke="#555" stroke-width="1"/></svg>
<svg style="left:512px;top:544px" width="18" height="18" viewBox="0 0 18 18"><path d="M1 8h5v9H1zM6 2h5v15H6zM11 6h5v11h-5z" fill="#e6e6e6" stroke="#c2c2c2" stroke-width="1.1"/></svg>
<svg style="left:512px;top:576px" width="18" height="17" viewBox="0 0 18 17"><rect x="0.6" y="0.6" width="13" height="15" fill="#5aa0e6" stroke="#2b6fb0" stroke-width="1.2"/><path d="M0.6 5h13M0.6 10h13M5 0.6v15M9.5 0.6v15" stroke="#fff" stroke-width="1.1"/><path d="M11 8h3v8h-3zM14 4h3v12h-3z" fill="#fff" stroke="#333" stroke-width="1.1"/></svg>
<svg style="left:512px;top:607px" width="16" height="18" viewBox="0 0 16 18"><path d="M1 3l3-2h11v14l-3 2H1z" fill="#e8e8e8" stroke="#bbb" stroke-width="1.2"/><path d="M12 3v14M1 3h11" stroke="#bbb"/></svg>
<svg style="left:505px;top:698px" width="30" height="30" viewBox="0 0 30 30"><path d="M12 8V6.9Q12.5 6 13.4 6.2Q14.3 6.6 14.3 7.8V11.2M12 8L7.8 12.2L12.5 16.6L17.4 11.6L14.3 9.4" fill="none" stroke="#2a2a2a" stroke-width="1.2" stroke-linejoin="round"/><path d="M23.4 12.6L16.8 19.2" stroke="#333" stroke-width="2.2" stroke-linecap="round"/><path d="M23.4 12.6L16.8 19.2" stroke="#fff" stroke-width="0.6"/><path d="M17.5 18.2Q13.5 20.2 10.8 21.7Q15.2 22.2 18.6 19.6Z" fill="#3f86b8" stroke="#2f6f9a" stroke-width="0.8"/></svg>
<div class="a" style="left:503px;top:633.5px;width:213px;height:32px;border:3.4px solid #9c1c1c;border-radius:17px"></div>
<div class="a" style="left:1579px;top:176px;width:21px;height:735px;background:#f7f7f7"></div>
<svg style="left:1585px;top:183px" width="11" height="8"><path d="M0.5 7.5L5.5 1l5 6.5z" fill="#666"/></svg>
<div class="a" style="left:1586.5px;top:197px;width:8.5px;height:675px;border-radius:5px;background:#707070"></div>
<svg style="left:1585px;top:899.5px" width="11" height="8"><path d="M0.5 0.5L5.5 7l5-6.5z" fill="#666"/></svg>
<div class="a" style="left:0;top:911px;width:1600px;height:30px;background:#f0f0f0"></div>
<svg style="left:17px;top:921px" width="7" height="12"><path d="M6 1L1 6l5 5" fill="none" stroke="#999" stroke-width="1.1"/></svg>
<svg style="left:52px;top:921px" width="7" height="12"><path d="M1 1l5 5-5 5" fill="none" stroke="#999" stroke-width="1.1"/></svg>
<div class="a" style="left:110px;top:911px;width:62px;height:29px;background:#fff;border-radius:0 0 6px 6px"></div>
<div class="t" style="left:119px;top:918px;font-size:14px;color:#1b1b1b">Sheet1</div>
<div class="a" style="left:119px;top:935px;width:44px;height:2.5px;background:#1e6e42"></div>
<div class="a" style="left:176px;top:916px;width:1px;height:22px;background:#dadada"></div>
<svg style="left:221px;top:920px" width="13" height="13"><path d="M6.5 0v13M0 6.5h13" stroke="#444" stroke-width="1.2"/></svg>
<svg style="left:959px;top:921px" width="4" height="13"><circle cx="2" cy="2" r="1.2" fill="#444"/><circle cx="2" cy="6.5" r="1.2" fill="#444"/><circle cx="2" cy="11" r="1.2" fill="#444"/></svg>
<svg style="left:984px;top:922px" width="7" height="10"><path d="M6.5 0.5v9L0.5 5z" fill="#555"/></svg>
<div class="a" style="left:997px;top:923px;width:525px;height:8px;border-radius:4px;background:#707070"></div>
<svg style="left:1569px;top:922px" width="7" height="10"><path d="M0.5 0.5v9L6.5 5z" fill="#555"/></svg>
<div class="a" style="left:0;top:944px;width:1600px;height:19px;background:#f3f3f3;border-top:1px solid #e6e6e6"></div>
<div class="t" style="left:5px;top:952px;font-size:11px;color:#555">Ready</div>
<svg style="left:54px;top:948px" width="16" height="16" viewBox="0 0 16 16"><circle cx="7" cy="2.8" r="1.9" fill="none" stroke="#333" stroke-width="1.1"/><path d="M1.5 4Q4 6.5 7 6.5Q10 6.5 12.5 4M7 6.5V10L4.5 15.5M7 10L9 13" fill="none" stroke="#333" stroke-width="1.1"/><path d="M10 11.5l4 4M14 11.5l-4 4" stroke="#333" stroke-width="1.1"/></svg>
<div class="t" style="left:75px;top:952px;font-size:11px;font-weight:bold;color:#222">Accessibility: Investigate</div>
<div class="a" style="left:1283px;top:946px;width:43px;height:17px;background:#dedede"></div>
<svg style="left:1297px;top:949px" width="15" height="14"><path d="M0.5 0.5h14v14h-14zM5 0v14M10 0v14M0 5h15M0 10h15" fill="none" stroke="#333"/></svg>
<svg style="left:1340px;top:949px" width="15" height="14"><path d="M0.5 0.5h14v14h-14z" fill="none" stroke="#333"/><path d="M4 3.5h7v8H4zM5.5 6h4M5.5 8h4" fill="none" stroke="#333" stroke-width="0.9"/></svg>
<svg style="left:1383px;top:949px" width="15" height="14"><path d="M0.5 14V0.5h14V14M5 0.5v6h5v-6" fill="none" stroke="#333"/></svg>
<div class="a" style="left:1418px;top:956px;width:7px;height:1px;background:#555"></div>
<div class="a" style="left:1432px;top:956.5px;width:105px;height:1px;background:#555"></div>
<div class="a" style="left:1481px;top:950px;width:5px;height:13px;background:#555"></div>
<svg style="left:1543px;top:952px" width="9" height="9"><path d="M4.5 0v9M0 4.5h9" stroke="#555"/></svg>
<div class="t" style="left:1565px;top:952px;font-size:11.5px;color:#444">100%</div>
<div class="a" style="left:0;top:962px;width:1600px;height:1px;background:#8a8a8a"></div>
</body></html>
